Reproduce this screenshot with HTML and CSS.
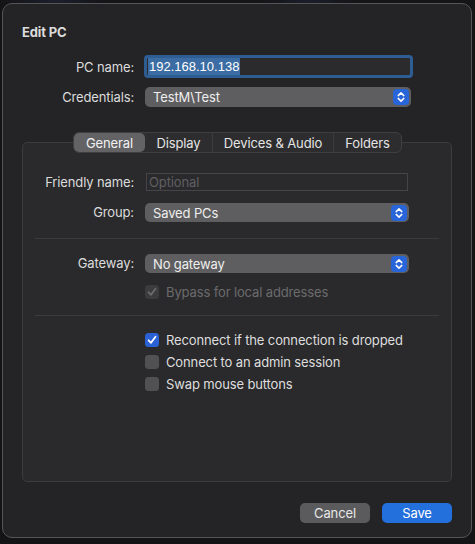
FILE: index.html
```html
<!DOCTYPE html>
<html lang="en">
<head>
<meta charset="utf-8">
<title>Edit PC</title>
<link rel="stylesheet" href="styles.css">
</head>
<body>
<div class="backdrop">
  <div class="sheet">
    <h1 class="title">Edit PC</h1>

    <div class="form top-form">
      <div class="lbl r-name">PC name:</div>
      <div class="field focus"><span class="sel">192.168.10.138</span></div>
      <div class="lbl r-cred">Credentials:</div>
      <div class="popup"><span class="popup-text">TestM\Test</span><span class="stepper"><svg viewBox="0 0 16 16" width="16" height="16"><path d="M5.2 6.6 8 3.9l2.8 2.7M5.2 9.4 8 12.1l2.8-2.7" fill="none" stroke="#fff" stroke-width="1.5" stroke-linecap="round" stroke-linejoin="round"/></svg></span></div>
    </div>

    <div class="tabs">
      <div class="seg">
        <div class="seg-item w1 active">General</div>
        <div class="seg-item w2">Display</div>
        <div class="seg-item w3 div-l">Devices &amp; Audio</div>
        <div class="seg-item w4 div-l">Folders</div>
      </div>
    </div>

    <div class="tabbox">
      <div class="form box-form">
        <div class="lbl h18">Friendly name:</div>
        <div class="field plain"><span class="placeholder">Optional</span></div>
        <div class="lbl h19">Group:</div>
        <div class="popup narrow"><span class="popup-text">Saved PCs</span><span class="stepper"><svg viewBox="0 0 16 16" width="16" height="16"><path d="M5.2 6.6 8 3.9l2.8 2.7M5.2 9.4 8 12.1l2.8-2.7" fill="none" stroke="#fff" stroke-width="1.5" stroke-linecap="round" stroke-linejoin="round"/></svg></span></div>
      </div>

      <div class="sep"></div>

      <div class="form box-form">
        <div class="lbl h19">Gateway:</div>
        <div class="popup narrow"><span class="popup-text">No gateway</span><span class="stepper"><svg viewBox="0 0 16 16" width="16" height="16"><path d="M5.2 6.6 8 3.9l2.8 2.7M5.2 9.4 8 12.1l2.8-2.7" fill="none" stroke="#fff" stroke-width="1.5" stroke-linecap="round" stroke-linejoin="round"/></svg></span></div>
        <div class="lbl"></div>
        <div class="check disabled"><span class="box checked-dis"><svg viewBox="0 0 14 14" width="14" height="14"><path d="M3.6 7.3 6 9.8l4.5-6" fill="none" stroke="#6b6b6d" stroke-width="1.8" stroke-linecap="round" stroke-linejoin="round"/></svg></span><span>Bypass for local addresses</span></div>
      </div>

      <div class="sep sep2"></div>

      <div class="checks">
        <div class="check"><span class="box checked"><svg viewBox="0 0 14 14" width="14" height="14"><path d="M3.6 7.3 6 9.8l4.5-6" fill="none" stroke="#fff" stroke-width="1.8" stroke-linecap="round" stroke-linejoin="round"/></svg></span><span>Reconnect if the connection is dropped</span></div>
        <div class="check"><span class="box"></span><span>Connect to an admin session</span></div>
        <div class="check"><span class="box"></span><span>Swap mouse buttons</span></div>
      </div>
    </div>

    <div class="buttons">
      <div class="btn cancel">Cancel</div>
      <div class="btn save">Save</div>
    </div>
  </div>
</div>
</body>
</html>
```

FILE: styles.css
```css
* { box-sizing: border-box; }
html, body { margin: 0; padding: 0; }
body {
  width: 475px;
  height: 544px;
  overflow: hidden;
  background: #141416;
  font-family: Inter, "Liberation Sans", sans-serif;
  font-size: 13px;
  letter-spacing: -0.13px;
  color: #dedede;
}
.backdrop {
  padding: 3px 3px 0 2px;
  background: linear-gradient(90deg, #151517 0%, #1c1e2c 12%, #151517 22%, #151517 55%, #1b1d2a 65%, #151517 75%) top / 100% 3px no-repeat, #141416;
  height: 544px;
}
.sheet {
  width: 470px;
  height: 535px;
  border: 1px solid #555557;
  border-radius: 10px;
  background: #242426;
  padding: 20px 19px 0 19px;
}
.title {
  margin: 0;
  font-size: 13px;
  line-height: 16px;
  font-weight: 700;
  color: #dcdcdc;
}
.form {
  display: grid;
  column-gap: 11px;
  align-items: center;
}
.top-form {
  margin-top: 15px;
  grid-template-columns: 112px 266px;
  row-gap: 9px;
}
.lbl {
  text-align: right;
  line-height: 16px;
  color: #dcdcdc;
}
.field {
  display: flex;
  align-items: center;
  background: #2b2b2d;
}
.field.focus {
  margin-left: -1px;
  width: 269px;
  height: 23px;
  border: 3px solid #2d5d92;
  border-radius: 4px;
  padding-left: 1px;
}
.sel {
  background: #3b6ca3;
  color: #ffffff;
  font-family: "Liberation Sans", Inter, sans-serif;
  letter-spacing: 0;
  line-height: 17px;
  padding: 0 1px;
}
.field.plain {
  height: 18px;
  width: 262px;
  margin-left: 1px;
  border: 1px solid #454547;
  padding-left: 2px;
  background: #2a2a2c;
}
.placeholder { color: #5f5f61; line-height: 16px; }
.popup {
  display: flex;
  align-items: center;
  justify-content: space-between;
  height: 20px;
  background: #5e5e60;
  border-radius: 5px;
  padding: 0 2px 0 8px;
  color: #eeeeee;
}
.popup.narrow { width: 264px; height: 19px; }
.popup-text { line-height: 16px; }
.stepper {
  width: 16px;
  height: 16px;
  border-radius: 4px;
  background: #2765d9;
  display: flex;
}
.tabs {
  margin-top: 25px;
  display: flex;
  justify-content: center;
  position: relative;
  z-index: 1;
  padding-left: 1px;
}
.seg {
  display: flex;
  height: 21px;
  border: 1px solid #3f3f41;
  border-radius: 6px;
  background: #2d2d2f;
}
.seg-item {
  display: flex;
  align-items: center;
  justify-content: center;
  color: #e4e4e4;
  line-height: 16px;
  border-radius: 5px;
}
.w1 { width: 71px; }
.w2 { width: 67px; }
.w3 { width: 121px; }
.w4 { width: 68px; }
.seg-item.active { background: #636366; color: #f2f2f2; }
.div-l { border-left: 1px solid #3c3c3e; border-radius: 0; }
.tabbox {
  margin-top: -11px;
  height: 340px;
  border: 1px solid #3c3c3e;
  border-radius: 5px;
  background: #2a2a2c;
  padding: 30px 12px 0 12px;
}
.box-form {
  grid-template-columns: 99px 264px;
  row-gap: 12px;
}
.h18 { height: 18px; line-height: 18px; }
.h19 { height: 19px; line-height: 19px; }
.sep {
  height: 1px;
  background: #3b3b3d;
  margin: 16px 0 15px;
}
.sep2 { margin: 16px 0 17px; }
.check {
  display: flex;
  align-items: center;
  gap: 7px;
  height: 14px;
  line-height: 16px;
  color: #dedede;
}
.check.disabled { color: #6a6a6c; }
.box {
  width: 14px;
  height: 14px;
  border-radius: 3.5px;
  background: #515153;
  display: flex;
  flex: none;
}
.box.checked { background: #2a62d6; }
.box.checked-dis { background: #3c3c3e; }
.checks {
  padding-left: 110px;
  display: flex;
  flex-direction: column;
  gap: 8px;
}
.buttons {
  margin-top: 21px;
  display: flex;
  justify-content: flex-end;
  gap: 12px;
}
.btn {
  width: 70px;
  height: 20px;
  border-radius: 5px;
  display: flex;
  align-items: center;
  justify-content: center;
  line-height: 16px;
}
.cancel { background: #5b5b5d; color: #e8e8e8; }
.save { background: #2370dc; color: #ffffff; }
```
